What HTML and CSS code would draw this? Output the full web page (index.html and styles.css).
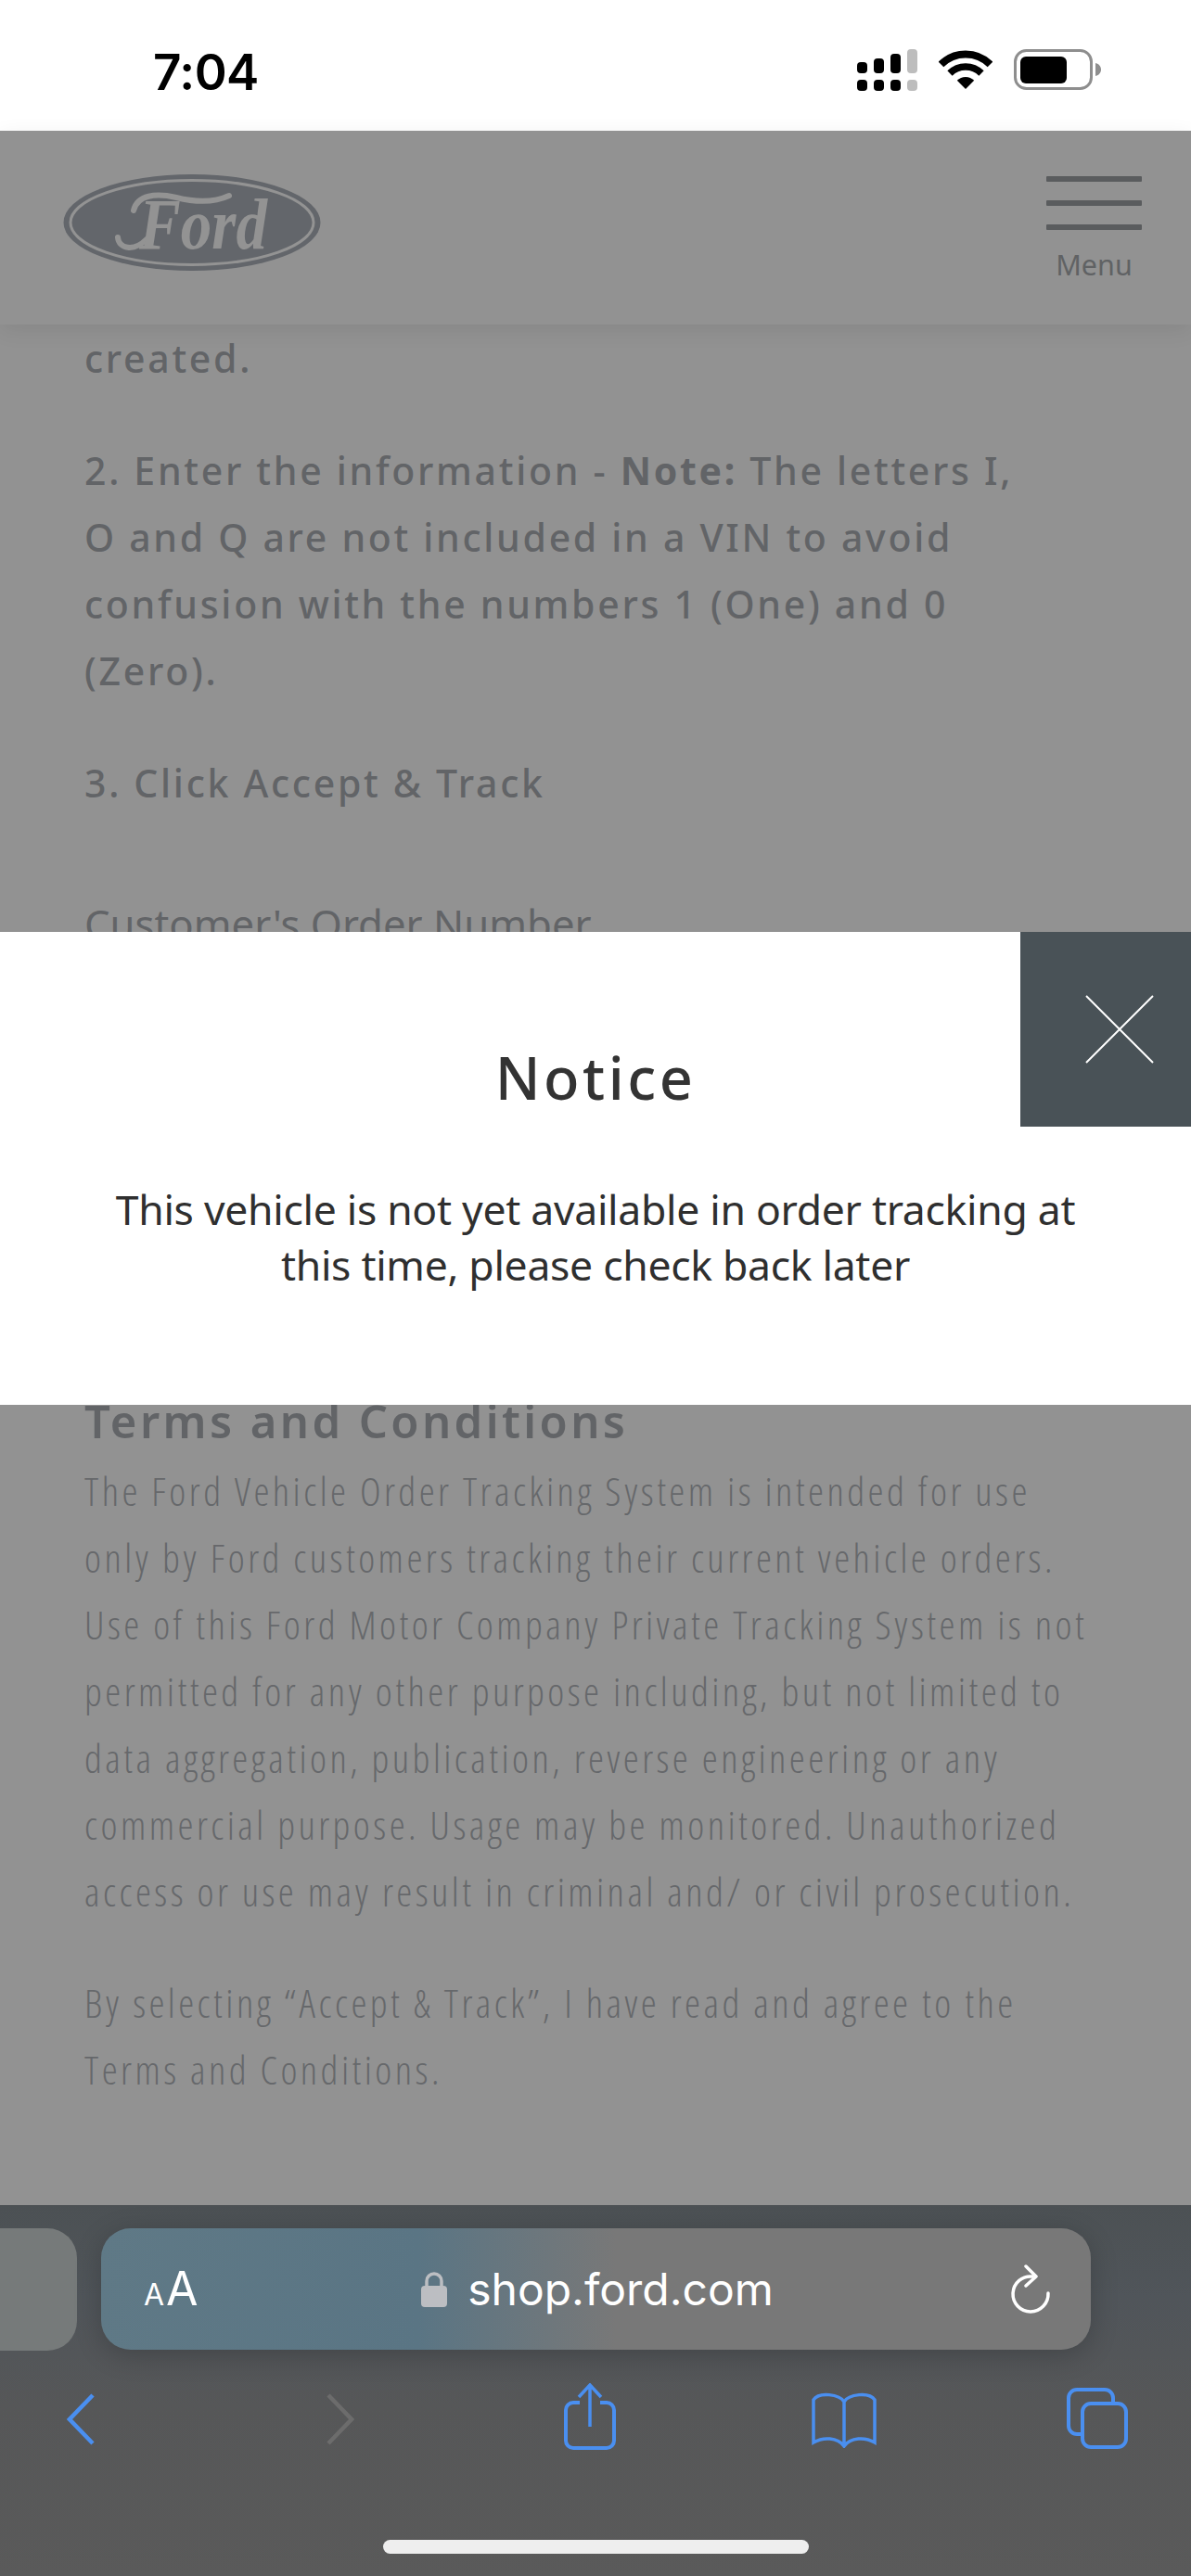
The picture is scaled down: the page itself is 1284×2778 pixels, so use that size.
FILE: index.html
```html
<!DOCTYPE html>
<html lang="en">
<head>
<meta charset="utf-8">
<title>Ford Order Tracking</title>
<link rel="stylesheet" href="styles.css">
</head>
<body>
<div class="screen">
  <div class="status">
    <span class="time">7:04</span>
    <div class="status-icons">
      <svg class="ic-signal" width="65" height="45" viewBox="0 0 65 45">
        <g fill="#000">
          <rect x="0" y="14" width="11" height="12" rx="4"/><rect x="18" y="10" width="11" height="16" rx="4"/><rect x="36" y="5" width="11" height="21" rx="4"/>
          <rect x="0" y="33" width="11" height="12" rx="4"/><rect x="18" y="33" width="11" height="12" rx="4"/><rect x="36" y="33" width="11" height="12" rx="4"/>
        </g>
        <g fill="#bdbdbd"><rect x="54" y="0" width="11" height="26" rx="4"/><rect x="54" y="33" width="11" height="12" rx="4"/></g>
      </svg>
      <svg class="ic-wifi" width="58" height="42" viewBox="0 0 58 42">
        <path d="M2.5 15.5A37.5 37.5 0 0 1 55.5 15.5" fill="none" stroke="#000" stroke-width="8"/>
        <path d="M12 25A24 24 0 0 1 46 25" fill="none" stroke="#000" stroke-width="7.5"/>
        <path d="M29 42L19.8 32.8A13 13 0 0 1 38.2 32.8Z" fill="#000"/>
      </svg>
      <svg class="ic-batt" width="94" height="44" viewBox="0 0 94 44">
        <rect x="1.5" y="1.5" width="82" height="41" rx="12" fill="none" stroke="#8e8e8e" stroke-width="3"/>
        <rect x="7" y="8" width="50" height="29" rx="6" fill="#000"/>
        <path d="M88 15C92 16 94 19 94 22S92 28 88 29Z" fill="#8e8e8e"/>
      </svg>
    </div>
  </div>

  <header class="site-header">
    <svg class="logo" width="278" height="104" viewBox="0 0 278 104">
      <ellipse cx="139" cy="52" rx="138.500" ry="52" fill="#63666b"/>
      <ellipse cx="139" cy="52" rx="131" ry="45.500" fill="none" stroke="#939393" stroke-width="3"/>
      <path d="M76 39C80 22 100 20 122 25C142 30 162 31 179 23" fill="none" stroke="#939393" stroke-width="6" stroke-linecap="round"/>
      <path d="M59 68C60 80 76 84 90 70" fill="none" stroke="#939393" stroke-width="6" stroke-linecap="round"/>
      <text class="logo-text" x="82" y="80" textLength="138" lengthAdjust="spacingAndGlyphs">Ford</text>
    </svg>
    <div class="menu">
      <span class="bar"></span><span class="bar"></span><span class="bar"></span>
      <span class="menu-label">Menu</span>
    </div>
  </header>

  <main class="content">
    <p class="step">created.</p>
    <p class="step">2. Enter the information - <b>Note:</b> The letters I, O and Q are not included in a VIN to avoid confusion with the numbers 1 (One) and 0 (Zero).</p>
    <p class="step">3. Click Accept &amp; Track</p>
    <h3 class="field-label">Customer's Order Number</h3>
    <h2 class="terms-title">Terms and Conditions</h2>
    <p class="fine">The Ford Vehicle Order Tracking System is intended for use only by Ford customers tracking their current vehicle orders. Use of this Ford Motor Company Private Tracking System is not permitted for any other purpose including, but not limited to data aggregation, publication, reverse engineering or any commercial purpose. Usage may be monitored. Unauthorized access or use may result in criminal and/ or civil prosecution.</p>
    <p class="fine">By selecting “Accept &amp; Track”, I have read and agree to the Terms and Conditions.</p>
  </main>

  <section class="modal">
    <button class="close" aria-label="Close">
      <svg width="74" height="74" viewBox="0 0 74 74"><path d="M1 1L73 73M73 1L1 73" stroke="#fff" stroke-width="2" fill="none"/></svg>
    </button>
    <h1 class="modal-title">Notice</h1>
    <p class="modal-text">This vehicle is not yet available in order tracking at this time, please check back later</p>
  </section>

  <footer class="safari">
    <div class="address-row">
      <div class="prev-tab"></div>
      <div class="address">
        <span class="aa"><small>A</small>A</span>
        <span class="site">
          <svg width="28" height="38" viewBox="0 0 28 38"><path d="M6 17V10A8 8 0 0 1 22 10V17" fill="none" stroke="#bcbec2" stroke-width="3.500"/><rect x="0" y="15" width="28" height="23" rx="4" fill="#bcbec2"/></svg>
          <span class="domain">shop.ford.com</span>
        </span>
        <svg class="reload" width="44" height="54" viewBox="0 0 44 54"><path d="M24 13A19 19 0 1 0 41 31" fill="none" stroke="#fff" stroke-width="3.500" stroke-linecap="round"/><path d="M17 2L28 13L17 23" fill="none" stroke="#fff" stroke-width="3.500" stroke-linecap="round" stroke-linejoin="round"/></svg>
      </div>
    </div>
    <nav class="toolbar">
      <svg class="t-back" width="30" height="56" viewBox="0 0 30 56"><path d="M28 2L3 28L28 54" fill="none" stroke="#4a8ff0" stroke-width="4.500"/></svg>
      <svg class="t-fwd" width="30" height="56" viewBox="0 0 30 56"><path d="M2 2L27 28L2 54" fill="none" stroke="#6c6c6c" stroke-width="4.500"/></svg>
      <svg class="t-share" width="56" height="72" viewBox="0 0 56 72"><path d="M17 21H10A8 8 0 0 0 2 29V62A8 8 0 0 0 10 70H46A8 8 0 0 0 54 62V29A8 8 0 0 0 46 21H39" fill="none" stroke="#4a8ff0" stroke-width="4"/><path d="M28 47V3M16 15L28 2L40 15" fill="none" stroke="#4a8ff0" stroke-width="3.500"/></svg>
      <svg class="t-book" width="70" height="60" viewBox="0 0 70 60"><path d="M35 10C30 2 8 -1 2 8V54C12 48 28 48 35 58C42 48 58 48 68 54V8C62 -1 40 2 35 10Z M35 10V58" fill="none" stroke="#4a8ff0" stroke-width="3.500"/></svg>
      <svg class="t-tabs" width="66" height="66" viewBox="0 0 66 66"><rect x="17" y="17" width="47" height="47" rx="9" fill="none" stroke="#4a8ff0" stroke-width="4"/><path d="M17 50H11A9 9 0 0 1 2 41V11A9 9 0 0 1 11 2H41A9 9 0 0 1 50 11V17" fill="none" stroke="#4a8ff0" stroke-width="4"/></svg>
    </nav>
    <div class="home-indicator"></div>
  </footer>
</div>
</body>
</html>
```

FILE: styles.css
```css
* { box-sizing: border-box; }
html, body { margin: 0; padding: 0; }
body { width: 1284px; height: 2778px; overflow: hidden; font-family: "Noto Sans", sans-serif; background: #929292; }
.screen { position: relative; width: 1284px; height: 2778px; display: flex; flex-direction: column; background: #929292; }

.status { flex: 0 0 141px; background: #fff; display: flex; align-items: flex-start; justify-content: space-between; padding: 56px 97px 0 165px; }
.time { font-family: Inter, sans-serif; font-weight: 600; font-size: 53px; line-height: 44px; color: #000; letter-spacing: -0.5px; }
.status-icons { display: flex; align-items: flex-start; margin-top: -3px; }
.ic-wifi { margin-left: 23px; margin-top: 1px; }
.ic-batt { margin-left: 23px; }

.site-header { flex: 0 0 209px; position: relative; z-index: 2; background: #929292; box-shadow: 0 6px 22px rgba(0,0,0,.08); display: flex; justify-content: space-between; padding: 47px 53px 0 68px; }
.logo-text { font-family: "Liberation Serif", serif; font-style: italic; font-weight: 700; font-size: 78px; fill: #939393; }
.menu { width: 103px; display: flex; flex-direction: column; align-items: center; margin-top: 2px; }
.bar { width: 103px; height: 6px; margin-bottom: 20px; background: #5a5c5e; border-radius: 1px; }
.menu-label { font-size: 30.500px; line-height: 36px; color: #606264; margin-top: -1px; }

.content { flex: 1 1 auto; min-height: 0; overflow: hidden; padding: 0 0 0 91px; color: #626467; }
.step { margin: 0 0 49px; width: 1030px; font-size: 41px; line-height: 72px; letter-spacing: 2.700px; font-weight: 500; }
.step b { font-weight: 700; }
.field-label { margin: 80px 0 0; font-size: 43.700px; line-height: 72px; font-weight: 400; }
.terms-title { margin: 470px 0 0; font-size: 49px; line-height: 60px; letter-spacing: 3.400px; font-weight: 600; }
.fine { margin: 0 0 48px; width: 1086px; font-family: "Open Sans", sans-serif; font-stretch: 75%; font-size: 43px; line-height: 72px; letter-spacing: 3.450px; font-weight: 300; color: #66686b; }
.terms-title + .fine { margin-top: 10px; }

.modal { position: absolute; z-index: 3; left: 0; top: 1005px; width: 1284px; height: 510px; background: #fff; text-align: center; padding-top: 122px; }
.close { position: absolute; top: 0; right: 0; width: 184px; height: 210px; background: #495257; border: 0; padding: 0 0 0 30px; display: flex; align-items: center; justify-content: center; }
.modal-title { margin: 0; font-size: 63px; line-height: 70px; font-weight: 500; letter-spacing: 3.500px; color: #333; }
.modal-text { margin: 77px auto 0; width: 1060px; font-size: 44.500px; line-height: 60px; color: #2f2f2f; letter-spacing: -0.3px; }

.safari { flex: 0 0 400px; position: relative; z-index: 2; background: linear-gradient(#4c5154 0, #50555a 25%, #565758 55%, #5a5a5a 100%); }
.address-row { display: flex; padding-top: 25px; gap: 26px; }
.prev-tab { width: 83px; height: 132px; background: #767a7a; border-radius: 0 32px 32px 0; }
.address { width: 1067px; height: 131px; border-radius: 32px; background: linear-gradient(90deg, #5f7986 0, #5a7584 32%, #787878 52%, #787878 100%); box-shadow: 0 6px 30px rgba(0,0,0,.2); display: grid; grid-template-columns: 1fr auto 1fr; align-items: center; padding: 0 43px 0 46px; color: #fff; }
.aa { font-family: Inter, sans-serif; font-size: 50px; line-height: 60px; margin-top: 6px; }
.aa small { font-size: 32px; margin-right: 2px; }
.site { display: flex; align-items: center; gap: 22px; }
.domain { font-family: Inter, sans-serif; font-size: 48px; line-height: 60px; }
.reload { justify-self: end; }
.toolbar { display: flex; align-items: flex-start; padding: 39px 0 0 72px; }
.t-back { margin-top: 7px; }
.t-fwd { margin: 7px 0 0 250px; }
.t-share { margin: -4px 0 0 226px; }
.t-book { margin: 6px 0 0 211px; }
.t-tabs { margin: 1px 0 0 205px; }
.home-indicator { position: absolute; left: 413px; top: 361px; width: 459px; height: 15px; border-radius: 8px; background: #eee; }
```
